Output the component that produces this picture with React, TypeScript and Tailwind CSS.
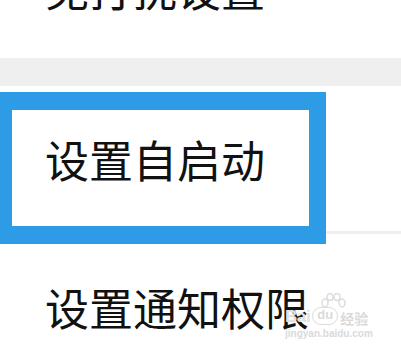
import React from "react";

const font = { fontFamily: '"Noto Sans CJK SC", "Noto Sans", sans-serif' };
const latin = { fontFamily: '"Liberation Sans", sans-serif' };

export default function App() {
  return (
    <div className="relative w-[401px] h-[351px] overflow-hidden bg-white text-[#111]" style={font}>
      <div className="h-[58px] overflow-hidden">
        <div className="pl-[45px] mt-[-34px] text-[44px] leading-[44px] whitespace-nowrap">免打扰设置</div>
      </div>
      <div className="h-[28px] bg-[#efefef]" />
      <div className="h-[6px]" />
      <div className="flex">
        <div className="w-[326px] h-[152px] shrink-0 border-[#2d9be6] border-l-[12px] border-t-[18px] border-r-[17px] border-b-[18px] pl-[33px] pt-[27px]">
          <div className="text-[44px] leading-[44px] whitespace-nowrap">设置自启动</div>
        </div>
        <div className="flex-1">
          <div className="mt-[139px] h-[3px] bg-[#efefef]" />
        </div>
      </div>
      <div className="pl-[45px] pt-[41px]">
        <div className="text-[44px] leading-[44px] whitespace-nowrap">设置通知权限</div>
      </div>
      <div className="absolute left-[285px] top-[293px] flex flex-col text-[#dadada] pointer-events-none">
        <svg className="ml-[34px] mb-[-6px]" width="28" height="20" viewBox="0 0 28 20" fill="none" stroke="#dcdcdc" strokeWidth="1.5">
          <ellipse cx="6" cy="10" rx="3" ry="4" />
          <ellipse cx="11" cy="4" rx="3" ry="3.5" />
          <ellipse cx="18" cy="4" rx="3" ry="3.5" />
          <ellipse cx="23" cy="10" rx="3" ry="4" />
        </svg>
        <div className="flex items-end gap-[2px]">
          <span className="text-[17px] font-bold leading-none tracking-tight text-[#e2e2e2]" style={latin}>Bai</span>
          <span className="w-[26px] h-[18px] rounded-[9px] border-[1.5px] border-[#dcdcdc] text-[13px] leading-[14px] text-center font-bold" style={latin}>du</span>
          <span className="text-[14px] leading-none font-bold">经验</span>
        </div>
        <span className="mt-[4px] text-[10px] leading-none font-bold" style={latin}>jingyan.baidu.com</span>
      </div>
    </div>
  );
}
